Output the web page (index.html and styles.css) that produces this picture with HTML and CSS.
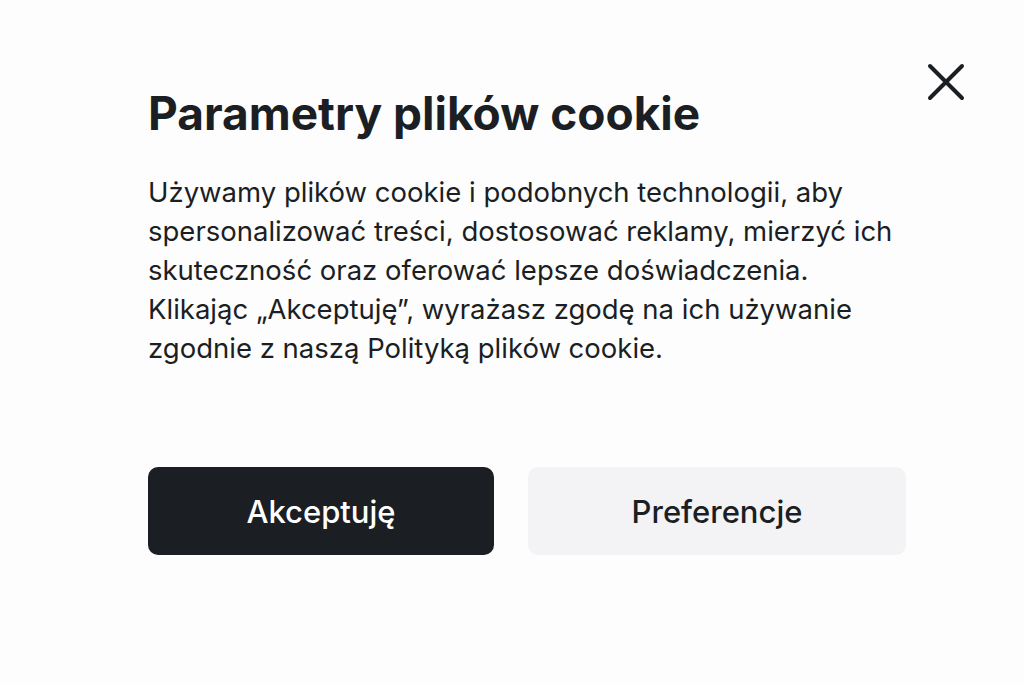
FILE: index.html
```html
<!DOCTYPE html>
<html lang="pl">
<head>
    <meta charset="UTF-8">
    <meta name="viewport" content="width=device-width, initial-scale=1.0">
    <title>Parametry plików cookie</title>
    <link rel="stylesheet" href="styles.css">
</head>
<body>
    <div class="dialog">
        <button class="close" type="button" aria-label="Zamknij">
            <svg width="40" height="40" viewBox="0 0 40 40">
                <path d="M4 4 L36 36 M36 4 L4 36" stroke="#1b1f24" stroke-width="4" stroke-linecap="round" fill="none"/>
            </svg>
        </button>
        <h1 class="title">Parametry plików cookie</h1>
        <p class="text">Używamy plików cookie i podobnych technologii, aby spersonalizować treści, dostosować reklamy, mierzyć ich skuteczność oraz oferować lepsze doświadczenia. Klikając „Akceptuję”, wyrażasz zgodę na ich używanie zgodnie z naszą Polityką plików cookie.</p>
        <div class="btns">
            <button class="accept" type="button">Akceptuję</button>
            <button class="prefs" type="button">Preferencje</button>
        </div>
    </div>
</body>
</html>
```

FILE: styles.css
```css
*{
    box-sizing: border-box;
    font-family: Inter, "Noto Sans", sans-serif;
}
body {
    margin: 0;
    padding: 0;
    background-color: #fdfdfd;
    color: #1b1f24;
}
.dialog {
    position: relative;
    width: 1024px;
    height: 683px;
    padding: 85px 0 0 148px;
    display: flex;
    flex-direction: column;
}
.close {
    position: absolute;
    top: 62px;
    left: 926px;
    width: 40px;
    height: 40px;
    padding: 0;
    border: none;
    background: none;
    cursor: pointer;
}
.close svg {
    display: block;
}
.title {
    margin: 0;
    font-size: 46px;
    line-height: 56px;
    font-weight: 700;
}
.text {
    margin: 32px 0 0;
    max-width: 750px;
    font-size: 27.5px;
    line-height: 39px;
    font-weight: 400;
}
.btns {
    margin-top: 99px;
    display: grid;
    grid-template-columns: 346px 378px;
    gap: 34px;
}
.btns button {
    height: 88px;
    border: none;
    border-radius: 10px;
    font-size: 31px;
    font-weight: 500;
    cursor: pointer;
}
.accept {
    background-color: #1b1f24;
    color: #fff;
}
.prefs {
    background-color: #f3f3f5;
    color: #1b1f24;
}
```
